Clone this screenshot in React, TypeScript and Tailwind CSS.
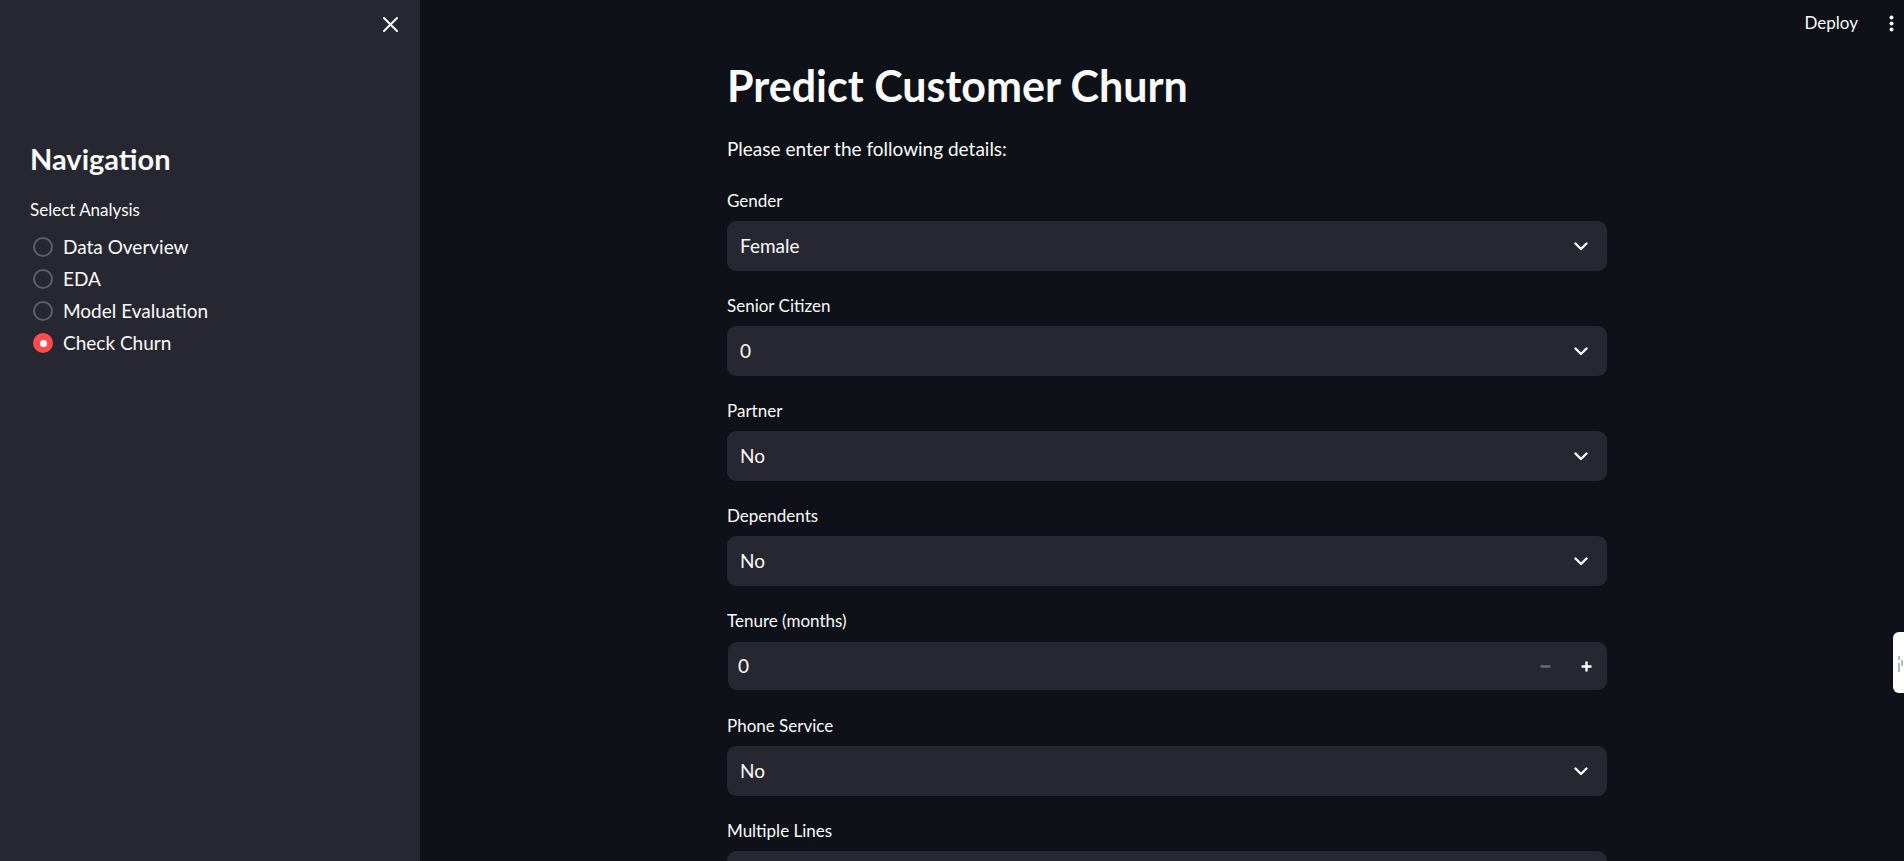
import { useState } from "react";

const font = { fontFamily: '"Lato", "Liberation Sans", sans-serif' };

function Chevron() {
  return (
    <svg width="14" height="9" viewBox="0 0 14 9" fill="none">
      <path d="M1.5 1.5 L7 7 L12.5 1.5" stroke="#fafafa" strokeWidth="2.4" strokeLinecap="round" strokeLinejoin="round" />
    </svg>
  );
}

function SelectField({ label, value }: { label: string; value: string }) {
  return (
    <div className="flex flex-col shrink-0">
      <div className="text-[17px] leading-[25px] text-[#fafafa] mb-[8px]">{label}</div>
      <div className="h-[50px] rounded-[9px] bg-[#262730] flex items-center justify-between pl-[13px] pr-[19px]">
        <span className="text-[19px] text-[#fafafa]">{value}</span>
        <Chevron />
      </div>
    </div>
  );
}

function NumberField({ label, value }: { label: string; value: string }) {
  return (
    <div className="flex flex-col shrink-0">
      <div className="text-[17px] leading-[25px] text-[#fafafa] mb-[9px]">{label}</div>
      <div className="h-[48px] mb-[1px] ml-[1px] rounded-[9px] bg-[#262730] flex items-center justify-between pl-[10px] pr-[15px]">
        <span className="text-[19px] text-[#fafafa]">{value}</span>
        <div className="flex items-center gap-[30px]">
          <svg width="11" height="11" viewBox="0 0 11 11">
            <path d="M0.5 5.5 H10.5" stroke="#6c6e78" strokeWidth="2.4" />
          </svg>
          <svg width="11" height="11" viewBox="0 0 11 11">
            <path d="M0.5 5.5 H10.5 M5.5 0.5 V10.5" stroke="#fafafa" strokeWidth="2.4" />
          </svg>
        </div>
      </div>
    </div>
  );
}

const options = ["Data Overview", "EDA", "Model Evaluation", "Check Churn"];

export default function App() {
  const [selected, setSelected] = useState("Check Churn");

  return (
    <div className="flex h-[861px] w-full overflow-hidden bg-[#0e1117] text-[#fafafa]" style={font}>
      {/* Sidebar */}
      <aside className="w-[420px] shrink-0 h-full bg-[#262730] flex flex-col">
        <div className="flex justify-end pt-[17px] pr-[22px] shrink-0">
          <svg width="15" height="15" viewBox="0 0 15 15">
            <path d="M1 1 L14 14 M14 1 L1 14" stroke="#fafafa" strokeWidth="2" strokeLinecap="round" />
          </svg>
        </div>
        <div className="pl-[30px] pt-[109px]">
          <h2 className="text-[29px] leading-[36px] font-bold">Navigation</h2>
          <div className="mt-[21px] text-[17px] leading-[24px]">Select Analysis</div>
          <div className="mt-[9px] flex flex-col">
            {options.map((o) => (
              <button
                key={o}
                onClick={() => setSelected(o)}
                className="flex items-center h-[32px] gap-[10px] text-left"
              >
                {selected === o ? (
                  <span className="ml-[3px] w-[20px] h-[20px] rounded-full bg-[#ff4b4b] flex items-center justify-center">
                    <span className="w-[7px] h-[7px] rounded-full bg-[#fafafa]" />
                  </span>
                ) : (
                  <span className="ml-[3px] w-[20px] h-[20px] rounded-full border-2 border-[#5e5f68]" />
                )}
                <span className="text-[19px]">{o}</span>
              </button>
            ))}
          </div>
        </div>
      </aside>

      {/* Main */}
      <main className="flex-1 relative flex flex-col">
        <header className="h-[46px] shrink-0 flex items-center justify-end pr-[10px] gap-[31px]">
          <span className="text-[17px]">Deploy</span>
          <svg width="5" height="17" viewBox="0 0 5 17">
            <circle cx="2.5" cy="2.5" r="2" fill="#fafafa" />
            <circle cx="2.5" cy="8.5" r="2" fill="#fafafa" />
            <circle cx="2.5" cy="14.5" r="2" fill="#fafafa" />
          </svg>
        </header>

        <div className="w-[880px] mx-auto translate-x-[5px] shrink-0">
          <h1 className="text-[43px] leading-[54px] font-bold mt-[13px]">Predict Customer Churn</h1>
          <p className="text-[19px] leading-[28px] mt-[22px]">Please enter the following details:</p>
          <div className="mt-[25px] flex flex-col gap-[22px]">
            <SelectField label="Gender" value="Female" />
            <SelectField label="Senior Citizen" value="0" />
            <SelectField label="Partner" value="No" />
            <SelectField label="Dependents" value="No" />
            <NumberField label="Tenure (months)" value="0" />
            <SelectField label="Phone Service" value="No" />
            <SelectField label="Multiple Lines" value="No" />
          </div>
        </div>

        {/* extension tab */}
        <div className="absolute right-0 top-[632px] w-[11px] h-[61px] bg-white rounded-l-[6px] flex items-center justify-end pr-[1px]">
          <svg width="5" height="22" viewBox="0 0 5 22">
            <path d="M1 4 V8 M1 11 V20 M4 8 V14" stroke="#b8bac2" strokeWidth="2" />
          </svg>
        </div>
      </main>
    </div>
  );
}
